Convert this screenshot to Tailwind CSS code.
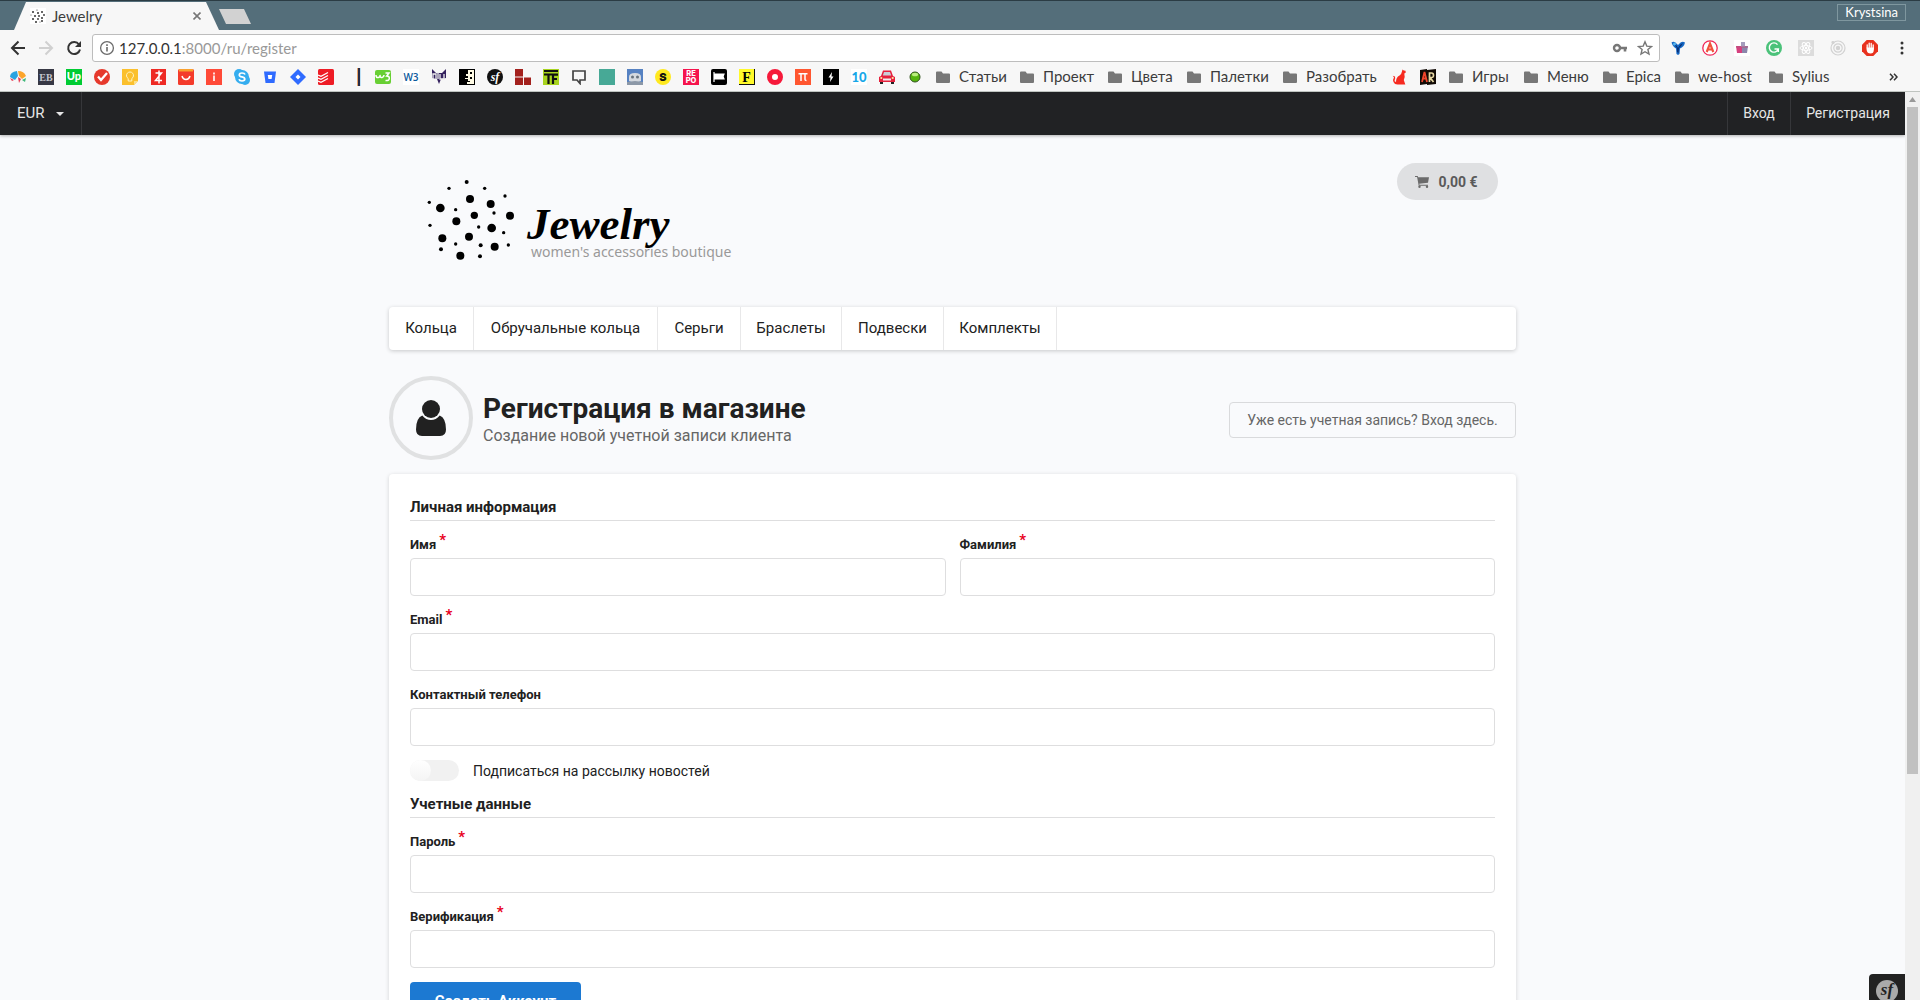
<!DOCTYPE html>
<html lang="ru">
<head>
<meta charset="utf-8">
<title>Jewelry</title>
<script src="https://cdn.jsdelivr.net/npm/@tailwindcss/browser@4"></script>
</head>
<body class="flex h-screen flex-col overflow-hidden bg-[#f9fafc] font-['Roboto',sans-serif] text-[#212121]">

<svg class="hidden"><symbol id="folder" viewBox="0 0 16 16"><path d="M1 3.500q0-1 1-1h4.500l1.500 2H14q1 0 1 1V13q0 1-1 1H2q-1 0-1-1z" fill="#777"/></symbol></svg>

<!-- Browser window -->
<div class="shrink-0 bg-[#f7f7f7] font-['Lato',sans-serif] text-[15px] text-[#3c3c3c]">
  <div class="flex h-[30px] items-end border-t border-[#2b3c44] bg-[#546e7a] pl-[14px]">
    <div class="flex h-7 w-[205px] items-center bg-[#f7f7f7] pr-[18px] pl-4 [clip-path:polygon(12px_0,192px_0,205px_100%,0_100%)]">
      <svg class="size-4 shrink-0" viewBox="0 0 16 16" fill="#333"><rect width="16" height="16" fill="#fff"/><circle cx="3" cy="4" r="1"/><circle cx="7" cy="2" r=".6"/><circle cx="8" cy="5" r="1"/><circle cx="12" cy="4" r="1"/><circle cx="5" cy="8" r="1"/><circle cx="9" cy="8" r=".9"/><circle cx="14" cy="7" r=".9"/><circle cx="12" cy="10" r="1"/><circle cx="3" cy="11" r="1"/><circle cx="8" cy="11" r=".9"/><circle cx="6" cy="14" r="1"/><circle cx="12" cy="13" r="1"/><circle cx="1" cy="7" r=".5"/><circle cx="10" cy="14" r=".5"/></svg>
      <span class="ml-[6px] flex-1">Jewelry</span>
      <button class="size-2" aria-label="Закрыть"><svg class="size-2" viewBox="0 0 8 8" stroke="#777" stroke-width="1.6"><path d="M.5.5l7 7M7.500.5l-7 7"/></svg></button>
    </div>
    <button class="mb-[6px] h-[15px] w-8 bg-[#d2d2d2] [clip-path:polygon(0_0,25px_0,100%_100%,7px_100%)]" aria-label="Новая вкладка"></button>
    <div class="mr-[14px] mb-[9px] ml-auto flex h-[17px] items-center border border-[#7f979f] px-[7px] text-[13px] text-white">Krystsina</div>
  </div>

  <div class="flex h-[34px] items-center pt-[2px] pr-[10px] pl-[10px]">
    <button aria-label="Назад"><svg class="size-4" viewBox="0 0 16 16" fill="none" stroke="#333" stroke-width="2"><path d="M15 8H2M8.500 1.500L2 8l6.500 6.500"/></svg></button>
    <button class="ml-3" aria-label="Вперёд"><svg class="size-4" viewBox="0 0 16 16" fill="none" stroke="#d0d0d0" stroke-width="2"><path d="M1 8h13M7.500 1.500L14 8l-6.500 6.500"/></svg></button>
    <button class="ml-3" aria-label="Обновить"><svg class="size-4" viewBox="0 0 16 16"><path d="M13 4.500A6 6 0 1 0 14 9.500" fill="none" stroke="#333" stroke-width="2"/><path d="M15 1v6H9z" fill="#333"/></svg></button>
    <div class="ml-[10px] flex h-7 flex-1 items-center rounded-[3px] border border-[#bdbdbd] bg-white px-[6px]">
      <svg class="size-4 shrink-0" viewBox="0 0 16 16"><circle cx="8" cy="8" r="6.400" fill="none" stroke="#6b6b6b" stroke-width="1.300"/><path d="M8 7v4.500M8 4.300v1.700" stroke="#6b6b6b" stroke-width="1.600"/></svg>
      <span class="ml-1 text-[#999]"><span class="text-[#333]">127.0.0.1</span>:8000/ru/register</span>
      <svg class="mr-[9px] ml-auto size-4" viewBox="0 0 16 16"><circle cx="5" cy="8" r="3" fill="none" stroke="#777" stroke-width="2.400"/><path d="M8 8h7M13 8v3.500" stroke="#777" stroke-width="2.600" fill="none"/></svg>
      <svg class="size-4" viewBox="0 0 16 16" fill="none" stroke="#777" stroke-width="1.400"><path d="M8 1.800l1.800 4.300 4.700.4-3.600 3 1.100 4.600L8 11.700l-4 2.400 1.100-4.600-3.600-3 4.700-.4z"/></svg>
    </div>
    <div class="ml-[10px] flex items-center gap-4">
      <svg class="size-4" viewBox="0 0 16 16"><path d="M1.500 2.500Q4 .5 7 4L8 5l1-1q3-3.500 6-1.500Q14 7 10 8.500L9.500 14l-1.500 1-1.500-1L6 8.500Q3 7 1.500 2.500z" fill="#1568c4"/><path d="M3 3q2 0 5 5 2-4 5-5-2 4-4 5l-.5 5-1.500-1V8z" fill="#0a2f75"/><circle cx="4.500" cy="4" r="1.500" fill="#54b5ef"/></svg>
      <svg class="size-4" viewBox="0 0 16 16"><circle cx="8" cy="8" r="7.200" fill="#fff" stroke="#f0285a" stroke-width="1.300"/><path d="M4.700 12L8 3.500 11.300 12M6 9.500h4" fill="none" stroke="#f0523c" stroke-width="2.200"/></svg>
      <svg class="size-4" viewBox="0 0 16 16"><rect width="16" height="16" fill="#fff"/><path d="M2 6h6v7H3z" fill="#d6417f"/><path d="M8 6h6l-1 7H8z" fill="#8b86ab"/><path d="M7 2h4v5H7z" fill="#a59dbd"/><path d="M2 6h12v2H2z" fill="#b3557f" opacity=".5"/></svg>
      <svg class="size-4" viewBox="0 0 16 16"><circle cx="8" cy="8" r="8" fill="#4bc27a"/><path d="M11.500 4.600A4.600 4.600 0 1 0 12.300 9H8.500M12.300 9v3" fill="none" stroke="#fff" stroke-width="1.400"/></svg>
      <svg class="size-4" viewBox="0 0 16 16"><rect width="16" height="16" fill="#dcdcdc"/><g fill="none" stroke="#fff"><ellipse cx="8" cy="8" rx="6" ry="2.400"/><ellipse cx="8" cy="8" rx="6" ry="2.400" transform="rotate(60 8 8)"/><ellipse cx="8" cy="8" rx="6" ry="2.400" transform="rotate(120 8 8)"/></g><circle cx="8" cy="8" r="1.200" fill="#fff"/></svg>
      <svg class="size-4" viewBox="0 0 16 16" fill="none" stroke="#d2d2d2" stroke-width="1.200"><circle cx="8" cy="8" r="7"/><circle cx="8" cy="8" r="4.200"/><circle cx="8" cy="8" r="1.600" fill="#d2d2d2"/><circle cx="3" cy="2.500" r="1" fill="#d2d2d2"/></svg>
      <svg class="size-4" viewBox="0 0 16 16"><path d="M4.700 0h6.600L16 4.700v6.600L11.300 16H4.700L0 11.300V4.700z" fill="#e8321f"/><path d="M5.200 8V4.800M7.200 7.500V3.200M9.200 7.500V3.500M11.200 9V5" stroke="#fff" stroke-width="1.300" stroke-linecap="round"/><path d="M4.600 7.500h7.200V10q0 3.500-3.300 3.500T4.600 10z" fill="#fff"/></svg>
      <button aria-label="Меню"><svg class="size-4" viewBox="0 0 16 16" fill="#333"><circle cx="8" cy="3" r="1.500"/><circle cx="8" cy="8" r="1.500"/><circle cx="8" cy="13" r="1.500"/></svg></button>
    </div>
  </div>

  <div class="flex h-7 items-center gap-3 border-b border-[#bfc4c0] pr-[22px] pb-[2px] pl-[10px]">
    <svg class="size-4 shrink-0" viewBox="0 0 16 16"><path d="M0 8q0-5 7-6L8 7l-3 4z" fill="#2aa3e0"/><path d="M8 2q6 0 8 5l-4 3-3-3z" fill="#fca52c"/><path d="M8 8l3 2-2 4z" fill="#e8384f"/><path d="M12 11l4-2-1 4z" fill="#3fb87a"/><path d="M0 9l4 2-2 1z" fill="#e8384f"/></svg>
    <svg class="size-4 shrink-0" viewBox="0 0 16 16"><rect width="16" height="16" fill="#373844"/><text x="8" y="12" text-anchor="middle" font-family="Liberation Serif" font-weight="700" font-size="10" fill="#c5c6ce">EB</text></svg>
    <svg class="size-4 shrink-0" viewBox="0 0 16 16"><rect width="16" height="16" fill="#0c3"/><text x="8" y="11" text-anchor="middle" font-family="Lato" font-weight="900" font-size="11" fill="#fff">Up</text></svg>
    <svg class="size-4 shrink-0" viewBox="0 0 16 16"><circle cx="8" cy="8" r="8" fill="#e6392c"/><path d="M4 7.500l3 3.500 6-7" fill="none" stroke="#fff" stroke-width="2.300"/></svg>
    <svg class="size-4 shrink-0" viewBox="0 0 16 16"><path d="M0 0h16v12l-4 4H0z" fill="#fbc02d"/><path d="M12 16l4-4h-4z" fill="#fbe08a"/><path d="M6.200 9.500a3.500 3.500 0 1 1 3.600 0V12H6.200z" fill="none" stroke="#fff3c4"/></svg>
    <svg class="size-4 shrink-0" viewBox="0 0 16 16"><rect x="1" width="15" height="16" fill="#ee2a24"/><path d="M5.500 4h6l-6 7.500h6.500M9 1.500v13" fill="none" stroke="#fff" stroke-width="1.500"/></svg>
    <svg class="size-4 shrink-0" viewBox="0 0 16 16"><rect width="16" height="16" rx="1.500" fill="#f43b2b"/><path d="M1 0h14v2.500H1z" fill="#f9a12f"/><path d="M4 7q1 3.500 4 3.500T12 7" fill="none" stroke="#fff" stroke-width="1.500"/></svg>
    <svg class="size-4 shrink-0" viewBox="0 0 16 16"><rect width="16" height="16" fill="#ff4a38"/><path d="M8 6.500V12M8 3.500v2" stroke="#fff" stroke-width="1.600"/></svg>
    <svg class="size-4 shrink-0" viewBox="0 0 16 16"><circle cx="5" cy="5" r="5" fill="#35adef"/><circle cx="11" cy="11" r="5" fill="#35adef"/><circle cx="8" cy="8" r="7" fill="#35adef"/><path d="M11 5.500Q10.500 4 8 4 5.300 4 5.300 5.900q0 1.500 2.700 2t2.800 2.200Q10.800 12 8 12q-2.500 0-3-1.700" fill="none" stroke="#fff" stroke-width="1.700"/></svg>
    <svg class="size-4 shrink-0" viewBox="0 0 16 16"><path d="M2 2.500h12L12.500 14h-9z" fill="#2f6bff"/><path d="M5.800 6h4.400l-.6 4H6.400z" fill="#fff"/></svg>
    <svg class="size-4 shrink-0" viewBox="0 0 16 16"><path d="M8 0l8 8-8 8-8-8z" fill="#2f6bff"/><path d="M8 5.500l2.500 2.500L8 10.500 5.500 8z" fill="#fff"/></svg>
    <svg class="size-4 shrink-0" viewBox="0 0 16 16"><rect width="16" height="16" rx="1.500" fill="#ee1c25"/><path d="M0 6l3 1.300L10 3.500M0 9l3 1.300L10 6.500M0 12l3 1.300L10 9.500" fill="none" stroke="#fff" stroke-width="1.200"/></svg>
    <svg class="h-[18px] w-[17px] shrink-0" viewBox="0 0 17 18"><path d="M11.500 0v18" stroke="#e8a469"/><path d="M13 0v18" stroke="#282b45" stroke-width="2"/><path d="M14.500 0v18" stroke="#bde0f5"/></svg>
    <svg class="size-4 shrink-0" viewBox="0 0 16 16"><rect y="1" width="16" height="14" rx="2" fill="#68cf33"/><path d="M1 6q0 3 2.300 2.500T5 6q0 3 2 2.500T9 6M10.500 4H14l-2.300 3Q14.500 7 14.300 9.500T10.500 11.500" fill="none" stroke="#fff" stroke-width="1.500"/></svg>
    <svg class="size-4 shrink-0" viewBox="0 0 16 16"><rect width="16" height="16" fill="#fff"/><text x="8" y="12" text-anchor="middle" font-family="Open Sans" font-weight="600" font-size="10" fill="#0b5a9c">W3</text></svg>
    <svg class="size-4 shrink-0" viewBox="0 0 16 16"><path d="M1 0l4 4h6l4-4v9l-5 1-2 5-2-5-5-1z" fill="#35225f"/><path d="M2 10V5h3v5M9 5v5h4V5M7 3v7" fill="none" stroke="#eee" stroke-width="1.300"/></svg>
    <svg class="size-4 shrink-0" viewBox="0 0 16 16"><path d="M0 0h16v16H0z"/><path d="M9 1h6v14H8v-2h3v-1H9v-2H6V9h3V7H7V5h2z" fill="#fffbe5"/><path d="M11 3h2v2h-2zM11 8h2v2h-2z" fill="#000"/></svg>
    <svg class="size-4 shrink-0" viewBox="0 0 16 16"><circle cx="8" cy="8" r="8" fill="#111"/><text x="8" y="11.500" text-anchor="middle" font-family="Liberation Serif" font-style="italic" font-weight="700" font-size="12" fill="#fff">sf</text></svg>
    <svg class="size-4 shrink-0" viewBox="0 0 16 16" fill="#a3211d"><path d="M0 0h8v7.500H0zM0 8.500h8V16H0zM9 8.500h7V16H9z"/></svg>
    <svg class="size-4 shrink-0" viewBox="0 0 16 16"><rect width="16" height="16" fill="#a8d41f"/><path d="M1 2h14M1 5.500h8M5.500 5v10M10 15V5.700h5M10 10h4" fill="none" stroke="#111" stroke-width="2.200"/></svg>
    <svg class="size-4 shrink-0" viewBox="0 0 16 16"><path d="M2 2h12v9H9v3.500L6 11H2z" fill="none" stroke="#444" stroke-width="1.700"/></svg>
    <svg class="size-4 shrink-0" viewBox="0 0 16 16"><rect width="16" height="16" fill="#47a996"/></svg>
    <svg class="size-4 shrink-0" viewBox="0 0 16 16"><rect width="16" height="16" fill="#5682c2"/><path d="M2 8q0-4 6-4t6 4v4q-6 3-12 0z" fill="#d4d9df"/><circle cx="5.500" cy="8" r="1.500" fill="#66727d"/><circle cx="10.500" cy="8" r="1.500" fill="#66727d"/><path d="M0 13l8-1 8 1v3H0z" fill="#8c98a7"/></svg>
    <svg class="size-4 shrink-0" viewBox="0 0 16 16"><circle cx="8" cy="8" r="8" fill="#ffe91f"/><text x="8" y="12" text-anchor="middle" font-family="Inter" font-weight="900" font-size="11" fill="#111">S</text></svg>
    <svg class="size-4 shrink-0" viewBox="0 0 16 16"><rect width="16" height="16" fill="#f5144d"/><g font-family="Inter" font-weight="800" font-size="7.500" fill="#fff" text-anchor="middle"><text x="8" y="7">RE</text><text x="8" y="14">PO</text></g></svg>
    <svg class="size-4 shrink-0" viewBox="0 0 16 16"><rect width="16" height="16" rx="2"/><path d="M3 3v10M4 5h9l-1 2.500 1 2.500H4z" fill="#fff" stroke="#fff" stroke-width="1.200"/></svg>
    <svg class="size-4 shrink-0" viewBox="0 0 16 16"><rect width="16" height="16" fill="#111"/><rect width="15" height="15" fill="#fff92b"/><text x="7.500" y="12.500" text-anchor="middle" font-family="Liberation Serif" font-weight="700" font-size="14" fill="#000">F</text></svg>
    <svg class="size-4 shrink-0" viewBox="0 0 16 16"><circle cx="8" cy="8" r="5.500" fill="#fff" stroke="#f6193a" stroke-width="5"/></svg>
    <svg class="size-4 shrink-0" viewBox="0 0 16 16"><rect width="16" height="16" fill="#ff5630"/><path d="M3.500 4.800h9M6 5v7M10 5v5.500q0 1 1.500 1" fill="none" stroke="#fff" stroke-width="1.500"/></svg>
    <svg class="size-4 shrink-0" viewBox="0 0 16 16"><rect width="16" height="16"/><path d="M9 3L5.500 8.500h2L7 13l3.500-5.500h-2z" fill="#fff"/></svg>
    <svg class="size-4 shrink-0" viewBox="0 0 16 16"><rect width="16" height="16" fill="#fff"/><text x="8" y="13" text-anchor="middle" font-family="Lato" font-weight="900" font-size="13" fill="#17a7e8">10</text></svg>
    <svg class="size-4 shrink-0" viewBox="0 0 16 16"><path d="M4 1.500h8L14 7l2 1v5H0V8l2-1z" fill="#e5213c"/><path d="M5 3h6l1.200 3.500H3.800z" fill="#c9ced6"/><path d="M4 9.500h8v2H4z" fill="#eee"/><circle cx="2.300" cy="9" r="1.100" fill="#ffe9a0"/><circle cx="13.700" cy="9" r="1.100" fill="#ffe9a0"/><path d="M1 13h3v2H1zM12 13h3v2h-3z" fill="#222"/></svg>
    <svg class="size-4 shrink-0" viewBox="0 0 16 16"><circle cx="8" cy="8" r="5" fill="#55b50e" stroke="#32521e"/><ellipse cx="8" cy="5.500" rx="3.200" ry="1.800" fill="#b9ee7c"/></svg>
    <a href="#" class="flex w-[72px] shrink-0 items-center gap-2"><svg class="size-4 shrink-0"><use href="#folder"/></svg>Статьи</a>
    <a href="#" class="flex w-[76px] shrink-0 items-center gap-2"><svg class="size-4 shrink-0"><use href="#folder"/></svg>Проект</a>
    <a href="#" class="flex w-[67px] shrink-0 items-center gap-2"><svg class="size-4 shrink-0"><use href="#folder"/></svg>Цвета</a>
    <a href="#" class="flex w-[84px] shrink-0 items-center gap-2"><svg class="size-4 shrink-0"><use href="#folder"/></svg>Палетки</a>
    <a href="#" class="flex w-[98px] shrink-0 items-center gap-2"><svg class="size-4 shrink-0"><use href="#folder"/></svg>Разобрать</a>
    <svg class="size-4 shrink-0" viewBox="0 0 16 16"><path d="M10.500.5l1.300 1 1.700.3.300 1.700-1.500 1q1 3.500-.5 6.500l1.500 4.500H5.500q-3 0-4-2.500T2 8.500L.8 6.800 3 7.500q.5 2-.3 3.500t1.300 2Q4 8 7.500 6.500q2-1.500 2.300-3.500z" fill="#f62a20"/></svg>
    <svg class="size-4 shrink-0" viewBox="0 0 16 16"><path d="M0 1l7-1v1l9-1v15l-9 1v-1l-7 1z" fill="#120b06"/><path d="M2 13L4.500 3 7 13M3 9.500h3" fill="none" stroke="#f0452b" stroke-width="1.800"/><path d="M9.500 13V4h2q2 0 2 2.300t-2 2.200H10l3.500 4.500" fill="none" stroke="#e8d9a4" stroke-width="1.700"/></svg>
    <a href="#" class="flex w-[63px] shrink-0 items-center gap-2"><svg class="size-4 shrink-0"><use href="#folder"/></svg>Игры</a>
    <a href="#" class="flex w-[67px] shrink-0 items-center gap-2"><svg class="size-4 shrink-0"><use href="#folder"/></svg>Меню</a>
    <a href="#" class="flex w-[60px] shrink-0 items-center gap-2"><svg class="size-4 shrink-0"><use href="#folder"/></svg>Epica</a>
    <a href="#" class="flex w-[82px] shrink-0 items-center gap-2 whitespace-nowrap"><svg class="size-4 shrink-0"><use href="#folder"/></svg>we-host</a>
    <a href="#" class="flex w-[64px] shrink-0 items-center gap-2"><svg class="size-4 shrink-0"><use href="#folder"/></svg>Sylius</a>
    <button class="ml-auto" aria-label="Другие закладки"><svg class="h-2 w-[9px]" viewBox="0 0 9 8" fill="none" stroke="#333" stroke-width="1.500"><path d="M1 .8L4 4 1 7.200M5 .8L8 4 5 7.200"/></svg></button>
  </div>
</div>

<!-- Page -->
<div class="flex min-h-0 flex-1">
  <div class="relative min-w-0 flex-1 overflow-hidden">
    <nav class="flex h-[43px] bg-[#212224] text-sm text-[#e6e6e6] shadow-[0_1px_3px_rgba(0,0,0,0.3)]">
      <div class="relative flex w-[82px] items-center border-r border-[#36373a]">
        <select aria-label="Валюта" class="h-full w-full appearance-none pl-[17px] text-[15px] outline-none"><option>EUR</option></select>
        <svg class="pointer-events-none absolute right-[17px] h-1 w-2" viewBox="0 0 8 4" fill="#e6e6e6"><path d="M0 0h8L4 4z"/></svg>
      </div>
      <a href="#" class="ml-auto flex w-[63px] items-center justify-center border-l border-[#36373a] pb-[2px]">Вход</a>
      <a href="#" class="flex w-[115px] items-center justify-center border-l border-[#36373a] pb-[2px]">Регистрация</a>
    </nav>

    <main class="mx-auto max-w-[1127px]">
      <header class="flex h-[172px] items-start justify-between pt-7 pr-[18px] pl-[34px]">
        <a href="#" class="mt-[15px]" aria-label="Jewelry">
          <svg class="h-[90px] w-[330px]" viewBox="0 0 330 90">
            <g transform="scale(.33333) translate(-129 -84)"><circle cx="260" cy="96" r="6"/><circle cx="207" cy="115" r="5"/><circle cx="314" cy="115" r="5"/><circle cx="375" cy="138" r="5"/><circle cx="270" cy="147" r="12"/><circle cx="148" cy="157" r="5"/><circle cx="332" cy="162" r="12"/><circle cx="181" cy="174" r="13"/><circle cx="227" cy="179" r="5"/><circle cx="342" cy="189" r="5"/><circle cx="283" cy="196" r="11"/><circle cx="390" cy="197" r="12"/><circle cx="229" cy="214" r="12"/><circle cx="150" cy="226" r="5"/><circle cx="296" cy="231" r="5"/><circle cx="335" cy="234" r="13"/><circle cx="371" cy="248" r="5"/><circle cx="187" cy="265" r="12"/><circle cx="267" cy="260" r="12"/><circle cx="227" cy="282" r="5"/><circle cx="302" cy="286" r="6"/><circle cx="385" cy="285" r="5"/><circle cx="344" cy="290" r="12"/><circle cx="183" cy="298" r="6"/><circle cx="241" cy="317" r="12"/><circle cx="300" cy="319" r="6"/></g>
            <text x="108" y="79" font-family="Noto Sans" font-size="14" fill="#999">women's accessories boutique</text>
            <text x="104" y="61" font-family="Brush Script MT, Liberation Serif, serif" font-style="italic" font-weight="700" font-size="45">Jewelry</text>
          </svg>
        </a>
        <button class="flex h-[37px] w-[101px] items-center justify-center gap-[9px] rounded-full bg-[#dfe0e2] pr-[2px] text-sm font-bold text-[#5a5a5a]">
          <svg class="h-3 w-[14px]" viewBox="0 0 14 12" fill="#6b6b6b"><path d="M0 0h2.700l.4 1.200H14l-1 5.500-8.800 1 .3 1H13v1H3.700L2.100 1.100H0z"/><circle cx="4.500" cy="10.800" r="1.200"/><circle cx="12" cy="10.800" r="1.200"/></svg>
          0,00 €
        </button>
      </header>

      <nav class="flex h-[43px] rounded bg-white text-[15px] shadow-[0_1px_4px_rgba(0,0,0,0.2)]">
        <a href="#" class="flex w-[85px] items-center justify-center border-r border-[#e8e8e9]">Кольца</a>
        <a href="#" class="flex w-[184px] items-center justify-center border-r border-[#e8e8e9]">Обручальные кольца</a>
        <a href="#" class="flex w-[83px] items-center justify-center border-r border-[#e8e8e9]">Серьги</a>
        <a href="#" class="flex w-[101px] items-center justify-center border-r border-[#e8e8e9]">Браслеты</a>
        <a href="#" class="flex w-[102px] items-center justify-center border-r border-[#e8e8e9]">Подвески</a>
        <a href="#" class="flex w-[113px] items-center justify-center border-r border-[#e8e8e9]">Комплекты</a>
      </nav>

      <div class="mt-[26px] flex items-center">
        <div class="flex size-[84px] items-center justify-center rounded-full border-4 border-[#e0e1e2]">
          <svg class="h-9 w-[30px]" viewBox="0 0 30 36" fill="#212121"><circle cx="15" cy="9" r="9"/><path d="M6.300 15.500Q10 20 15 20t8.700-4.500Q30 18 30 29.500 30 36 24 36H6q-6 0-6-6.500Q0 18 6.300 15.500z"/></svg>
        </div>
        <div class="ml-[10px] flex-1 pt-[2px]">
          <h1 class="text-[28px] leading-[34px] font-bold">Регистрация в магазине</h1>
          <p class="text-base leading-5 text-[#666]">Создание новой учетной записи клиента</p>
        </div>
        <a href="#" class="mt-1 flex h-9 w-[287px] items-center justify-center rounded border border-[#d9dadc] text-sm text-[#666]">Уже есть учетная запись? Вход здесь.</a>
      </div>

      <form class="mt-[14px] rounded bg-white p-[21px] shadow-[0_1px_4px_rgba(0,0,0,0.16)]">
        <h2 class="mb-[14px] border-b border-[#dededf] pb-[1px] text-[15px] leading-6 font-bold">Личная информация</h2>
        <div class="mb-[14px] grid grid-cols-2 gap-[14px]">
          <div>
            <label for="first" class="mb-1 flex gap-[3px] text-[13px] leading-[19px] font-bold">Имя<span class="-mt-1 text-[15px] text-[#e8001c]">*</span></label>
            <input id="first" type="text" class="block h-[38px] w-full rounded border border-[#dededf] px-3">
          </div>
          <div>
            <label for="last" class="mb-1 flex gap-[3px] text-[13px] leading-[19px] font-bold">Фамилия<span class="-mt-1 text-[15px] text-[#e8001c]">*</span></label>
            <input id="last" type="text" class="block h-[38px] w-full rounded border border-[#dededf] px-3">
          </div>
        </div>
        <div class="mb-[14px]">
          <label for="email" class="mb-1 flex gap-[3px] text-[13px] leading-[19px] font-bold">Email<span class="-mt-1 text-[15px] text-[#e8001c]">*</span></label>
          <input id="email" type="email" class="block h-[38px] w-full rounded border border-[#dededf] px-3">
        </div>
        <div class="mb-[14px]">
          <label for="phone" class="mb-1 flex text-[13px] leading-[19px] font-bold">Контактный телефон</label>
          <input id="phone" type="tel" class="block h-[38px] w-full rounded border border-[#dededf] px-3">
        </div>
        <div class="mb-[11px] flex h-[21px] items-center">
          <input id="news" type="checkbox" class="h-[21px] w-[49px] appearance-none rounded-full bg-[#f1f1f1] before:block before:size-[21px] before:rounded-full before:bg-linear-to-b before:from-white before:to-[#f4f4f4]">
          <label for="news" class="ml-[14px] text-sm">Подписаться на рассылку новостей</label>
        </div>
        <h2 class="mb-[14px] border-b border-[#dededf] pb-[1px] text-[15px] leading-6 font-bold">Учетные данные</h2>
        <div class="mb-[14px]">
          <label for="pass" class="mb-1 flex gap-[3px] text-[13px] leading-[19px] font-bold">Пароль<span class="-mt-1 text-[15px] text-[#e8001c]">*</span></label>
          <input id="pass" type="password" class="block h-[38px] w-full rounded border border-[#dededf] px-3">
        </div>
        <div class="mb-[14px]">
          <label for="verify" class="mb-1 flex gap-[3px] text-[13px] leading-[19px] font-bold">Верификация<span class="-mt-1 text-[15px] text-[#e8001c]">*</span></label>
          <input id="verify" type="password" class="block h-[38px] w-full rounded border border-[#dededf] px-3">
        </div>
        <button type="button" class="block h-[38px] w-[171px] rounded bg-[#1c79d2] text-[15px] font-bold text-white">Создать Аккаунт</button>
      </form>
    </main>

    <button class="absolute right-0 bottom-0 flex h-[26px] w-9 items-start justify-center overflow-hidden rounded-tl bg-[#222] pt-[6px]" aria-label="Symfony">
      <svg class="size-[22px] shrink-0" viewBox="0 0 22 22"><circle cx="11" cy="11" r="11" fill="#aaa"/><text x="11" y="15" text-anchor="middle" font-family="Liberation Serif" font-style="italic" font-weight="700" font-size="17" fill="#222">sf</text></svg>
    </button>
  </div>

  <!-- Scroll bar -->
  <div class="flex w-[15px] shrink-0 flex-col items-center bg-[#f0f0f0]">
    <svg class="my-[5px] h-[5px] w-[7px] shrink-0" viewBox="0 0 7 5" fill="#999"><path d="M0 5h7L3.500 0z"/></svg>
    <div class="h-[667px] w-[11px] bg-[#c1c1c1]"></div>
  </div>
</div>
</body>
</html>
